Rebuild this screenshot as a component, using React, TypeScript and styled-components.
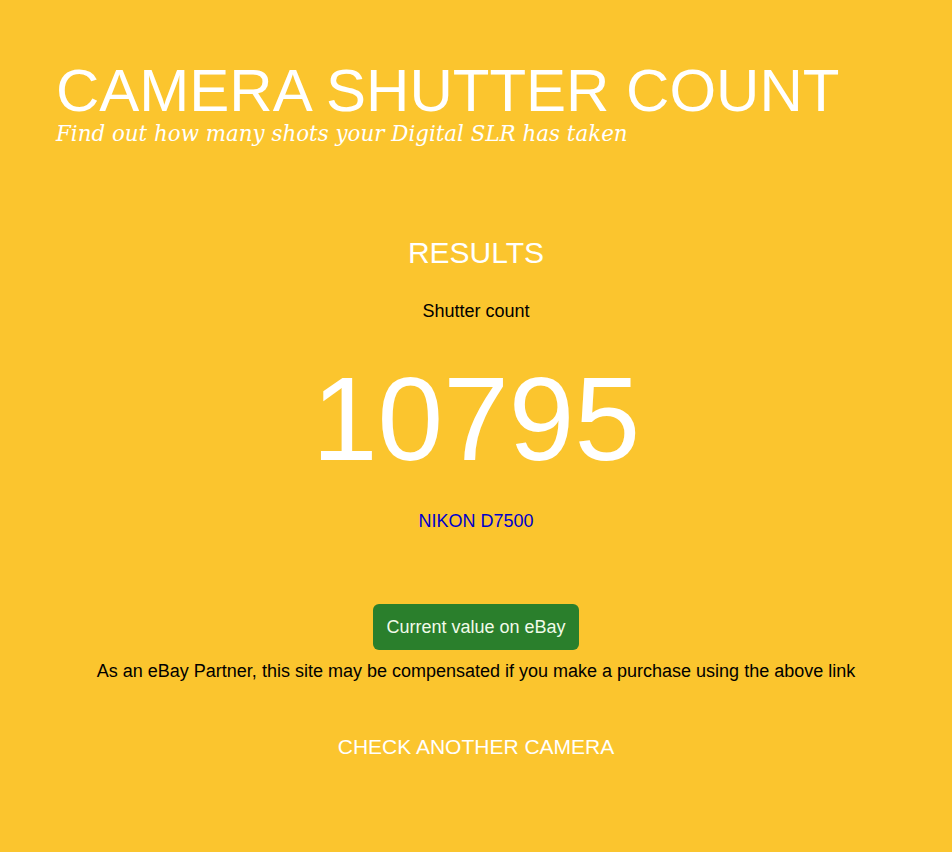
import styled, { createGlobalStyle } from 'styled-components'

const GlobalStyle = createGlobalStyle`
  html, body {
    margin: 0;
    padding: 0;
    background-color: #fbc52e;
  }
  body {
    font-family: "Liberation Sans", Arial, sans-serif;
  }
`

const StyledPage = styled.div`
  min-height: 852px;
  background-color: #fbc52e;
  box-sizing: border-box;
  padding: 61px 56px 0;
`

const StyledHeader = styled.header`
  display: flex;
  flex-direction: column;
`

const StyledTitle = styled.h1`
  margin: 0;
  font-size: 60px;
  font-weight: 400;
  line-height: 1;
  color: #ffffff;
`

const StyledTagline = styled.p`
  margin: 2px 0 0;
  font-family: "DejaVu Serif", "Liberation Serif", serif;
  font-style: italic;
  font-size: 21.4px;
  line-height: 1;
  color: #ffffff;
`

const StyledResults = styled.main`
  display: flex;
  flex-direction: column;
  align-items: center;
  text-align: center;
  padding-top: 91px;
`

const StyledSectionTitle = styled.h2`
  margin: 0;
  font-size: 30px;
  font-weight: 400;
  line-height: 1.2;
  color: #ffffff;
`

const StyledLabel = styled.div`
  margin-top: 30px;
  font-size: 18px;
  color: #000000;
`

const StyledCount = styled.div`
  margin-top: 27px;
  font-size: 118px;
  line-height: 1.2;
  color: #ffffff;
`

const StyledModel = styled.a`
  margin-top: 20px;
  font-size: 18px;
  color: #0000cc;
  text-decoration: none;
`

const StyledEbayButton = styled.a`
  margin-top: 72px;
  display: inline-flex;
  align-items: center;
  justify-content: center;
  height: 46px;
  padding: 0 13px;
  box-sizing: border-box;
  font-size: 18px;
  color: #f1fbe9;
  background-color: #2a7f2c;
  border-radius: 6px;
  text-decoration: none;
`

const StyledDisclaimer = styled.p`
  margin: 11px 0 0;
  font-size: 18px;
  color: #000000;
`

const StyledAnotherLink = styled.a`
  margin-top: 53px;
  font-size: 21px;
  color: #ffffff;
  text-decoration: none;
`

const App: React.FC = () => {
  return (
    <StyledPage>
      <GlobalStyle />
      <StyledHeader>
        <StyledTitle>CAMERA SHUTTER COUNT</StyledTitle>
        <StyledTagline>Find out how many shots your Digital SLR has taken</StyledTagline>
      </StyledHeader>

      <StyledResults>
        <StyledSectionTitle>RESULTS</StyledSectionTitle>
        <StyledLabel>Shutter count</StyledLabel>
        <StyledCount>10795</StyledCount>
        <StyledModel href="#">NIKON D7500</StyledModel>

        <StyledEbayButton href="#">Current value on eBay</StyledEbayButton>
        <StyledDisclaimer>
          As an eBay Partner, this site may be compensated if you make a purchase using the above link
        </StyledDisclaimer>

        <StyledAnotherLink href="#">CHECK ANOTHER CAMERA</StyledAnotherLink>
      </StyledResults>
    </StyledPage>
  )
}

export default App
